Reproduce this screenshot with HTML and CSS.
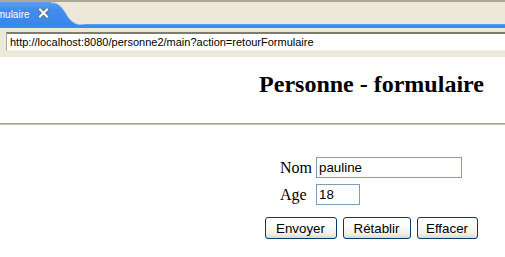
FILE: index.html
```html
<!DOCTYPE html>
<html lang="fr">
<head>
<meta charset="utf-8">
<title>Personne - formulaire</title>
<link rel="stylesheet" href="styles.css">
</head>
<body>
<div class="browser">
  <div class="tabbar">
    <div class="tab">
      <svg class="tab-bg" width="84" height="23" viewBox="0 0 84 23" aria-hidden="true">
        <defs>
          <linearGradient id="tabg" x1="0" y1="0" x2="0" y2="1">
            <stop offset="0" stop-color="#5a9ff2"/>
            <stop offset="0.35" stop-color="#3f8cee"/>
            <stop offset="1" stop-color="#3a86ea"/>
          </linearGradient>
        </defs>
        <path d="M0 0 H51 C59 0 62 5 66 11 C70 18 73 22 84 23 H0 Z" fill="url(#tabg)"/>
        <path d="M51 0.5 C59 0.5 62 5.5 66 11.5 C70 18.5 73 22.5 84 23" fill="none" stroke="#ffffff" stroke-opacity="0.55" stroke-width="1"/>
      </svg>
      <span class="tab-title">rmulaire</span>
      <svg class="tab-close" width="11" height="10" viewBox="0 0 11 10" aria-hidden="true">
        <path d="M2 1.5 L9 8.5 M9 1.5 L2 8.5" stroke="#6b6b6b" stroke-width="3.6" stroke-linecap="square"/>
        <path d="M2 1.5 L9 8.5 M9 1.5 L2 8.5" stroke="#ffffff" stroke-width="2" stroke-linecap="square"/>
      </svg>
    </div>
  </div>
  <div class="addressbar">
    <div class="url">http://localhost:8080/personne2/main?action=retourFormulaire</div>
  </div>
</div>
<main class="page">
  <div class="head">
    <h1 class="title">Personne - formulaire</h1>
  </div>
  <hr class="rule">
  <form class="form">
    <div class="fields">
      <label class="label" for="nom">Nom</label>
      <input class="field field-nom" id="nom" type="text" value="pauline">
      <label class="label" for="age">Age</label>
      <input class="field field-age" id="age" type="text" value="18">
    </div>
    <div class="buttons">
      <button class="btn btn-send" type="button">Envoyer</button>
      <button class="btn btn-reset" type="button">Rétablir</button>
      <button class="btn btn-clear" type="button">Effacer</button>
    </div>
  </form>
</main>
</body>
</html>
```
FILE: styles.css
```css
html, body {
  margin: 0;
  padding: 0;
  overflow: hidden;
  background: #ffffff;
}

body {
  width: 505px;
  height: 257px;
  font-family: "Liberation Serif", "Times New Roman", serif;
}

.browser {
  background: #ece9d8;
}

.tabbar {
  height: 23px;
  border-top: 2px solid #aca899;
  border-bottom: 3px solid #3d8aee;
  box-shadow: inset 0 -1px 0 #5a9ff4;
  display: flex;
}

.tab {
  position: relative;
  width: 84px;
  height: 23px;
  display: flex;
  align-items: center;
  overflow: hidden;
}

.tab-bg {
  position: absolute;
  left: 0;
  top: 0;
}

.tab-title {
  position: relative;
  margin-left: -6.6px;
  padding-top: 2px;
  font-family: "Liberation Sans", Arial, sans-serif;
  font-size: 10px;
  color: #ffffff;
  white-space: nowrap;
}

.tab-close {
  position: relative;
  margin-left: 8px;
  margin-top: -1px;
}

.addressbar {
  height: 25px;
  padding: 4px 0 0 6px;
}

.url {
  box-sizing: border-box;
  height: 19px;
  background: #ffffff;
  border-top: 2px solid #7e7c70;
  border-left: 1px solid #aca899;
  border-bottom: 1px solid #f3f1e6;
  padding: 0 0 0 3px;
  font-family: "Liberation Sans", Arial, sans-serif;
  font-size: 11px;
  line-height: 16px;
  color: #000000;
  white-space: nowrap;
}

.page {
  background: #ffffff;
}

.head {
  padding: 14px 0 0 238px;
  display: flex;
  justify-content: center;
}

.title {
  margin: 0;
  font-size: 24px;
  line-height: 27px;
  font-weight: bold;
  color: #000000;
}

.rule {
  margin: 25px 0 0 0;
  height: 0;
  border: none;
  border-top: 1px solid #a9a694;
  border-bottom: 1px solid #c4c1b0;
}

.form {
  margin: 0;
  padding: 32px 0 0 237px;
  display: flex;
  flex-direction: column;
  align-items: center;
}

.fields {
  display: grid;
  grid-template-columns: auto auto;
  column-gap: 4px;
  row-gap: 6px;
  align-items: center;
}

.label {
  font-size: 16px;
  color: #000000;
}

.field {
  box-sizing: border-box;
  height: 21px;
  margin: 0;
  padding: 0 2px;
  border: 1px solid #7f9db9;
  background: #ffffff;
  font-family: "Liberation Sans", Arial, sans-serif;
  font-size: 13.33px;
  color: #000000;
  justify-self: start;
}

.field-nom { width: 146px; }
.field-age { width: 44px; }

.buttons {
  margin-top: 12px;
  display: flex;
  gap: 6px;
}

.btn {
  box-sizing: border-box;
  height: 22px;
  margin: 0;
  padding: 0;
  border: 1px solid #003c74;
  border-radius: 3px;
  background: linear-gradient(180deg, #ffffff 0%, #fbfbf8 45%, #f0efe8 80%, #dcd8cb 100%);
  font-family: "Liberation Sans", Arial, sans-serif;
  font-size: 13.33px;
  color: #000000;
}

.btn-send { width: 72px; }
.btn-reset { width: 68px; }
.btn-clear { width: 61px; }
```
